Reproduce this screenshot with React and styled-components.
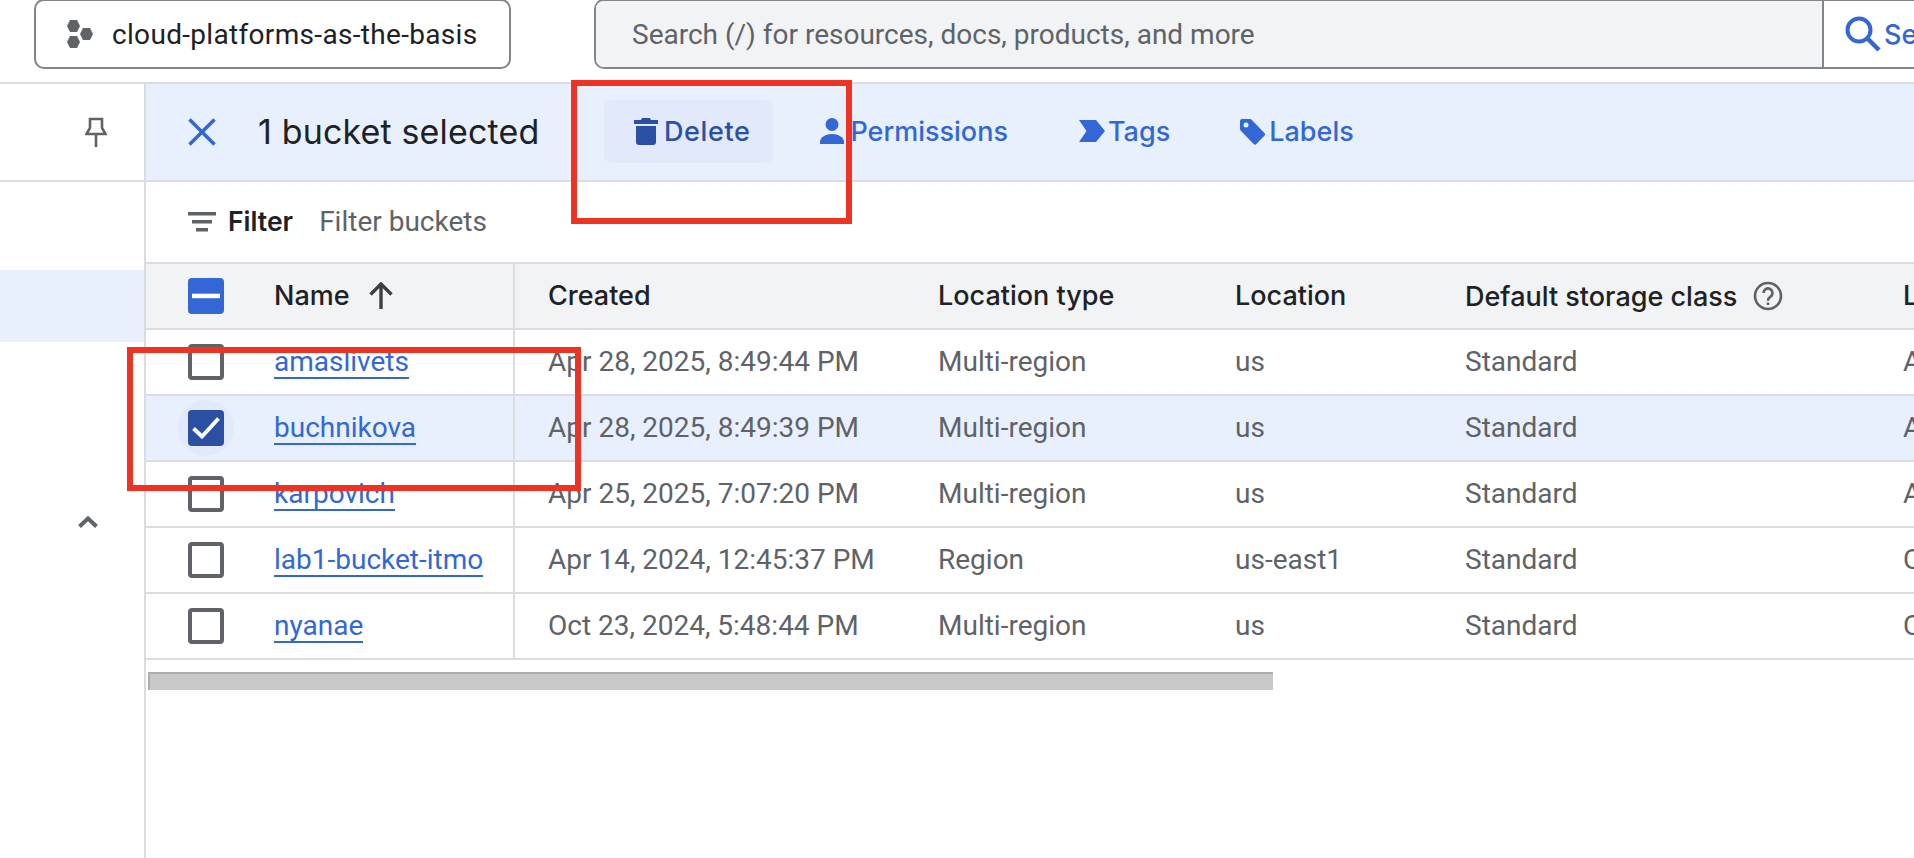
import React from "react";
import styled, { createGlobalStyle } from "styled-components";

const Global = createGlobalStyle`
  html, body { margin: 0; padding: 0; width: 1914px; height: 858px; overflow: hidden; background: #fff; }
  * { box-sizing: border-box; }
  body { font-family: Roboto, "Liberation Sans", sans-serif; color: #202124; }
`;

const Page = styled.div`
  position: relative;
  width: 1914px;
  height: 858px;
  overflow: hidden;
  display: flex;
  flex-direction: column;
`;

const TopBar = styled.header`
  height: 84px;
  flex: none;
  display: flex;
  align-items: flex-start;
  padding-left: 34px;
  border-bottom: 2px solid #dadce0;
`;

const ProjectButton = styled.button`
  width: 477px;
  height: 70px;
  margin-top: -1px;
  flex: none;
  display: flex;
  align-items: center;
  gap: 19px;
  padding: 0 0 0 31px;
  background: #fff;
  border: 2px solid #80868b;
  border-radius: 10px;
  font: 400 28px Roboto, sans-serif;
  letter-spacing: 0.32px;
  color: #202124;
`;

const SearchWrap = styled.div`
  margin-left: 83px;
  flex: 1;
  height: 70px;
  margin-top: -1px;
  display: flex;
  border: 2px solid #80868b;
  border-right: none;
  border-radius: 10px 0 0 10px;
  overflow: hidden;
`;

const SearchInput = styled.div`
  width: 1228px;
  flex: none;
  display: flex;
  align-items: center;
  padding-left: 36px;
  background: #f1f3f4;
  border-right: 2px solid #80868b;
  font-size: 28px;
  color: #5f6368;
`;

const SearchButton = styled.div`
  flex: 1;
  display: flex;
  align-items: center;
  gap: 3px;
  padding-left: 21px;
  white-space: nowrap;
  font: 500 27px Inter, sans-serif;
  color: #3367d6;
`;

const Body = styled.div`
  flex: 1;
  display: flex;
  min-height: 0;
`;

const Sidebar = styled.aside`
  width: 146px;
  flex: none;
  border-right: 2px solid #dadce0;
  display: flex;
  flex-direction: column;
`;

const PinRow = styled.div`
  height: 98px;
  flex: none;
  display: flex;
  align-items: center;
  padding-left: 85px;
  border-bottom: 2px solid #dadce0;
  margin-right: -2px;
`;

const NavHighlight = styled.div`
  height: 72px;
  margin-top: 88px;
  flex: none;
  background: #e8f0fe;
`;

const CollapseRow = styled.div`
  margin-top: 174px;
  padding-left: 78px;
  display: flex;
`;

const Main = styled.main`
  flex: 1;
  min-width: 0;
  display: flex;
  flex-direction: column;
  overflow: hidden;
`;

const ActionBar = styled.div`
  height: 98px;
  flex: none;
  display: flex;
  align-items: center;
  padding-left: 42px;
  background: #e8f0fe;
  border-bottom: 2px solid #dadce0;
`;

const SelectedCount = styled.span`
  margin: -2px 0 0 42px;
  width: 346px;
  flex: none;
  font: 400 34px Inter, sans-serif;
  letter-spacing: 0.15px;
  color: #202124;
`;

const ActionButton = styled.button`
  height: 63px;
  flex: none;
  display: flex;
  align-items: center;
  gap: ${(p) => p.$gap}px;
  margin: -2px 0 0 ${(p) => p.$offset}px;
  padding: ${(p) => (p.$active ? "0 23px 0 30px" : "0")};
  background: ${(p) => (p.$active ? "#e2e9fa" : "transparent")};
  border: none;
  border-radius: 8px;
  font: 500 27px Inter, sans-serif;
  letter-spacing: ${(p) => (p.$active ? "0.6px" : "0")};
  color: ${(p) => (p.$active ? "#2a4fa3" : "#3367d6")};
`;

const FilterRow = styled.div`
  height: 80px;
  flex: none;
  display: flex;
  align-items: center;
  padding-left: 42px;
`;

const FilterLabel = styled.span`
  margin: -2px 0 0 12px;
  font: 600 26.5px Inter, sans-serif;
  color: #202124;
`;

const FilterHint = styled.span`
  margin: -2px 0 0 26px;
  font-size: 28px;
  color: #5f6368;
`;

const columns = "128px 241px 423px 297px 230px 438px 200px";

const HeaderRow = styled.div`
  width: 1957px;
  height: 68px;
  flex: none;
  display: grid;
  grid-template-columns: ${columns};
  align-items: center;
  background: #f1f3f4;
  border-top: 2px solid #dadce0;
  border-bottom: 2px solid #dadce0;
  font: 500 27px Inter, sans-serif;
  color: #202124;
`;

const Row = styled.div`
  width: 1957px;
  height: 66px;
  flex: none;
  display: grid;
  grid-template-columns: ${columns};
  align-items: center;
  background: ${(p) => (p.$selected ? "#e8f0fe" : "#fff")};
  border-bottom: 2px solid #dadce0;
  font-size: 28px;
  color: #5f6368;
`;

const Cell = styled.div`
  margin-top: -2px;
  white-space: nowrap;
`;

const CheckCell = styled.div`
  padding-left: 42px;
  display: flex;
`;

const NameCell = styled.div`
  height: 100%;
  display: flex;
  align-items: center;
  gap: 19px;
  padding-bottom: ${(p) => (p.$header ? "2px" : "0")};
  white-space: nowrap;
  border-right: 2px solid #dadce0;
`;

const CreatedCell = styled.div`
  margin-top: -2px;
  padding-left: 33px;
  white-space: nowrap;
`;

const LabelWithHelp = styled.div`
  display: flex;
  align-items: center;
  gap: 16px;
  white-space: nowrap;
`;

const BucketLink = styled.a`
  display: inline-block;
  margin-top: 2px;
  line-height: 30px;
  color: #3367d6;
  border-bottom: 2px solid #3367d6;
`;

const CheckBox = styled.span`
  position: relative;
  width: 36px;
  height: 36px;
  flex: none;
  display: flex;
  align-items: center;
  justify-content: center;
  border-radius: 4px;
  border: ${(p) => (p.$state === "empty" ? "4px solid #5f6368" : "none")};
  background: ${(p) =>
    p.$state === "checked" ? "#2a4fa3" : p.$state === "mixed" ? "#3367d6" : "#fff"};
  ${(p) =>
    p.$state === "checked"
      ? `&::before {
          content: "";
          position: absolute;
          inset: -10px;
          border-radius: 50%;
          background: #e2e9fa;
          z-index: 0;
        }
        &::after {
          content: "";
          position: absolute;
          inset: 0;
          border-radius: 4px;
          background: #2a4fa3;
          z-index: 0;
        }`
      : ""}
  & > svg {
    position: relative;
    z-index: 1;
  }
`;

const Scrollbar = styled.div`
  width: 1125px;
  height: 18px;
  margin: 12px 0 0 2px;
  flex: none;
  background: #c9c9c9;
  border-top: 2px solid #adadad;
  border-left: 2px solid #adadad;
`;

const Annotation = styled.div`
  position: absolute;
  border: 6px solid #ee3224;
  pointer-events: none;
  left: ${(p) => p.$x}px;
  top: ${(p) => p.$y}px;
  width: ${(p) => p.$w}px;
  height: ${(p) => p.$h}px;
`;

const HexIcon = () => (
  <svg width="26" height="28" viewBox="0 0 26 28" fill="#5f6368">
    <polygon points="3,0 10,0 13,6 10,12 3,12 0,6" />
    <polygon points="16,8 23,8 26,14 23,20 16,20 13,14" />
    <polygon points="3,16 10,16 13,22 10,28 3,28 0,22" />
  </svg>
);

const SearchIcon = () => (
  <svg width="36" height="36" viewBox="0 0 36 36" fill="none" stroke="#3367d6" strokeWidth="4">
    <circle cx="14" cy="14" r="11.5" />
    <line x1="22" y1="22" x2="34" y2="34" strokeWidth="4.5" />
  </svg>
);

const PinIcon = () => (
  <svg width="22" height="30" viewBox="0 0 22 30" fill="none" stroke="#5f6368" strokeWidth="2.6">
    <path d="M5 2H17V11L20.5 17H1.5L5 11Z" />
    <line x1="11" y1="17" x2="11" y2="30" />
  </svg>
);

const ChevronUp = () => (
  <svg width="20" height="12" viewBox="0 0 20 12" fill="none" stroke="#5f6368" strokeWidth="4">
    <path d="M1.5 10.5L10 2.5L18.5 10.5" />
  </svg>
);

const CloseIcon = () => (
  <svg width="28" height="28" viewBox="0 0 28 28" stroke="#3367d6" strokeWidth="3.6">
    <line x1="1.5" y1="1.5" x2="26.5" y2="26.5" />
    <line x1="26.5" y1="1.5" x2="1.5" y2="26.5" />
  </svg>
);

const TrashIcon = () => (
  <svg width="24" height="27" viewBox="0 0 24 27" fill="#2a4fa3">
    <path d="M8 0h8l1 2h7v4H0V2h7z" />
    <path d="M2 8h20v16a3 3 0 0 1-3 3H5a3 3 0 0 1-3-3z" />
  </svg>
);

const PersonIcon = () => (
  <svg width="24" height="26" viewBox="0 0 24 26" fill="#3367d6">
    <circle cx="12" cy="6.5" r="6.5" />
    <path d="M0 26v-2c0-5 6-8 12-8s12 3 12 8v2z" />
  </svg>
);

const TagIcon = () => (
  <svg width="26" height="22" viewBox="0 0 26 22" fill="#3367d6">
    <polygon points="0,0 17,0 26,11 17,22 0,22 7.5,11" />
  </svg>
);

const LabelIcon = () => (
  <svg width="26" height="27" viewBox="0 0 26 27" fill="#3367d6">
    <path
      fillRule="evenodd"
      d="M3 1h8a2 2 0 0 1 1.4.6L25.4 15a2 2 0 0 1 0 2.8L17.4 26a2 2 0 0 1-2.8 0L1.6 12.4A2 2 0 0 1 1 11V3a2 2 0 0 1 2-2zM7 4.5a2.5 2.5 0 1 0 0 5a2.5 2.5 0 1 0 0-5z"
    />
  </svg>
);

const FilterIcon = () => (
  <svg width="28" height="20" viewBox="0 0 28 20" fill="#5f6368">
    <rect x="0" y="0" width="28" height="3.5" />
    <rect x="4" y="8" width="20" height="3.5" />
    <rect x="8" y="16" width="12" height="3.5" />
  </svg>
);

const ArrowUp = () => (
  <svg width="24" height="27" viewBox="0 0 24 27" fill="none" stroke="#3c4043" strokeWidth="3.4">
    <path d="M12 27V2M1.5 12.5L12 2L22.5 12.5" />
  </svg>
);

const HelpIcon = () => (
  <svg width="30" height="30" viewBox="0 0 30 30" fill="none" stroke="#5f6368" strokeWidth="2.6">
    <circle cx="15" cy="15" r="13" />
    <path d="M10.5 12a4.5 4.5 0 1 1 7 3.7c-1.6 1.1-2.5 2-2.5 4" />
    <line x1="15" y1="21.5" x2="15" y2="24" />
  </svg>
);

const MinusMark = () => (
  <svg width="28" height="6" viewBox="0 0 28 6" fill="#fff">
    <rect width="28" height="4.5" y="0.7" />
  </svg>
);

const CheckMark = () => (
  <svg width="28" height="24" viewBox="0 0 28 24" fill="none" stroke="#fff" strokeWidth="4">
    <path d="M1.5 12.5L10 20.5L26.5 2.5" />
  </svg>
);

const buckets = [
  ["amaslivets", "Apr 28, 2025, 8:49:44 PM", "Multi-region", "us", "Standard", "A"],
  ["buchnikova", "Apr 28, 2025, 8:49:39 PM", "Multi-region", "us", "Standard", "A", true],
  ["karpovich", "Apr 25, 2025, 7:07:20 PM", "Multi-region", "us", "Standard", "A"],
  ["lab1-bucket-itmo", "Apr 14, 2024, 12:45:37 PM", "Region", "us-east1", "Standard", "C"],
  ["nyanae", "Oct 23, 2024, 5:48:44 PM", "Multi-region", "us", "Standard", "C"],
];

export default function App() {
  return (
    <Page>
      <Global />
      <TopBar>
        <ProjectButton>
          <HexIcon />
          cloud-platforms-as-the-basis
        </ProjectButton>
        <SearchWrap>
          <SearchInput>Search (/) for resources, docs, products, and more</SearchInput>
          <SearchButton>
            <SearchIcon />
            Search
          </SearchButton>
        </SearchWrap>
      </TopBar>
      <Body>
        <Sidebar>
          <PinRow>
            <PinIcon />
          </PinRow>
          <NavHighlight />
          <CollapseRow>
            <ChevronUp />
          </CollapseRow>
        </Sidebar>
        <Main>
          <ActionBar>
            <CloseIcon />
            <SelectedCount>1 bucket selected</SelectedCount>
            <ActionButton $active $gap={6} $offset={0}>
              <TrashIcon />
              Delete
            </ActionButton>
            <ActionButton $gap={6} $offset={47}>
              <PersonIcon />
              Permissions
            </ActionButton>
            <ActionButton $gap={3} $offset={71}>
              <TagIcon />
              Tags
            </ActionButton>
            <ActionButton $gap={4} $offset={69}>
              <LabelIcon />
              Labels
            </ActionButton>
          </ActionBar>
          <FilterRow>
            <FilterIcon />
            <FilterLabel>Filter</FilterLabel>
            <FilterHint>Filter buckets</FilterHint>
          </FilterRow>
          <HeaderRow>
            <CheckCell>
              <CheckBox $state="mixed">
                <MinusMark />
              </CheckBox>
            </CheckCell>
            <NameCell $header>
              Name
              <ArrowUp />
            </NameCell>
            <CreatedCell>Created</CreatedCell>
            <Cell>Location type</Cell>
            <Cell>Location</Cell>
            <LabelWithHelp>
              Default storage class
              <HelpIcon />
            </LabelWithHelp>
            <Cell>Last modified</Cell>
          </HeaderRow>
          {buckets.map(([name, created, type, location, storage, last, selected]) => (
            <Row key={name} $selected={selected}>
              <CheckCell>
                <CheckBox $state={selected ? "checked" : "empty"}>
                  {selected && <CheckMark />}
                </CheckBox>
              </CheckCell>
              <NameCell>
                <BucketLink>{name}</BucketLink>
              </NameCell>
              <CreatedCell>{created}</CreatedCell>
              <Cell>{type}</Cell>
              <Cell>{location}</Cell>
              <Cell>{storage}</Cell>
              <Cell>{last}</Cell>
            </Row>
          ))}
          <Scrollbar />
        </Main>
      </Body>
      <Annotation $x={571} $y={80} $w={281} $h={144} />
      <Annotation $x={127} $y={347} $w={454} $h={144} />
    </Page>
  );
}
